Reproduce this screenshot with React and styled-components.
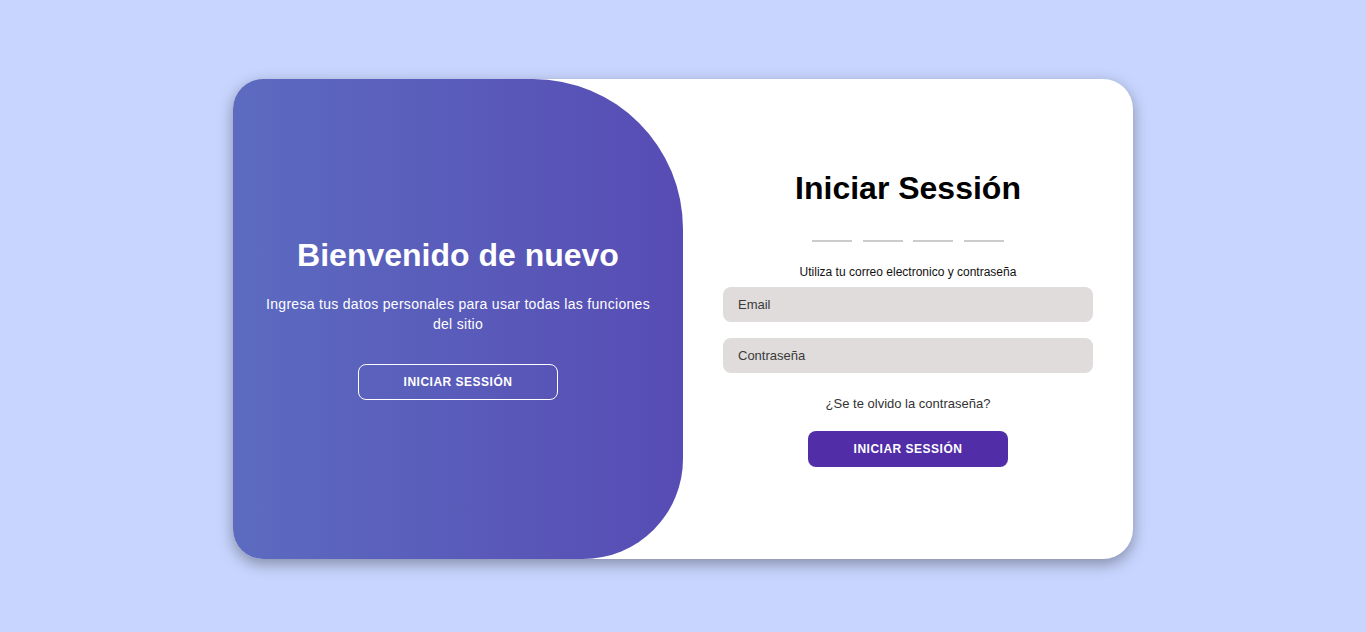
import React from "react";
import styled, { createGlobalStyle } from "styled-components";

const GlobalStyle = createGlobalStyle`
    * {
        box-sizing: border-box;
    }
    body {
        margin: 0;
        background: #c8d5fe;
        font-family: "Liberation Sans", Arial, sans-serif;
    }
`

const Page = styled.div`
    height: 632px;
    display: flex;
    justify-content: center;
    align-items: flex-start;
    padding-top: 79px;
`

const Container = styled.div`
    width: 900px;
    height: 480px;
    background: #fff;
    border-radius: 30px;
    box-shadow: 0 5px 15px rgba(0, 0, 0, 0.35);
    overflow: hidden;
    display: flex;
`

const TogglePanel = styled.div`
    width: 50%;
    height: 100%;
    background: linear-gradient(to right, #5c6bc0, #574cb4);
    border-radius: 0 150px 100px 0;
    color: #fff;
    display: flex;
    flex-direction: column;
    align-items: center;
    justify-content: center;
    padding: 0 30px 2px;
    text-align: center;
`

const FormPanel = styled.form`
    width: 50%;
    height: 100%;
    display: flex;
    flex-direction: column;
    align-items: center;
    justify-content: center;
    padding: 0 40px 2px;
`

const Title = styled.h1`
    margin: ${props => props.$form ? "0 0 33px" : "0"};
    font-size: 32px;
    line-height: 37px;
    font-weight: 700;
    color: ${props => props.$form ? "#000" : "#fff"};
`

const Text = styled.p`
    margin: 20px 0;
    font-size: 14px;
    line-height: 20px;
    letter-spacing: 0.3px;
`

const SocialRow = styled.div`
    display: flex;
    gap: 10.7px;
    margin-bottom: 23px;
`

const SocialLine = styled.a`
    display: block;
    width: 40px;
    height: 2px;
    background: #cccccc;
`

const Hint = styled.span`
    font-size: 12px;
    line-height: 14px;
    color: #111;
`

const Input = styled.input`
    width: 100%;
    height: 35px;
    margin: 8px 0;
    padding: 10px 15px;
    border: none;
    outline: none;
    border-radius: 8px;
    background: #e0dcdc;
    font-family: "Liberation Sans", Arial, sans-serif;
    font-size: 13px;
    color: #333;

    &::placeholder {
        color: #3a3a3a;
    }
`

const Forgot = styled.a`
    margin: 15px 0 10px;
    font-size: 13px;
    line-height: 15px;
    color: #333;
    text-decoration: none;
`

const Button = styled.button`
    margin-top: 10px;
    padding: 10px 45px;
    height: 36px;
    border-radius: 8px;
    border: 1px solid ${props => props.$ghost ? "#fff" : "transparent"};
    background: ${props => props.$ghost ? "transparent" : "#512da8"};
    color: #fff;
    font-family: "Liberation Sans", Arial, sans-serif;
    font-size: 12px;
    line-height: 14px;
    font-weight: 700;
    letter-spacing: 0.5px;
    text-transform: uppercase;
    cursor: pointer;
`

const App = () => {
    return (
        <Page>
            <GlobalStyle />
            <Container>
                <TogglePanel>
                    <Title>Bienvenido de nuevo</Title>
                    <Text>Ingresa tus datos personales para usar todas las funciones del sitio</Text>
                    <Button type="button" $ghost>Iniciar Sessión</Button>
                </TogglePanel>
                <FormPanel onSubmit={e => e.preventDefault()}>
                    <Title $form>Iniciar Sessión</Title>
                    <SocialRow>
                        <SocialLine href="#" />
                        <SocialLine href="#" />
                        <SocialLine href="#" />
                        <SocialLine href="#" />
                    </SocialRow>
                    <Hint>Utiliza tu correo electronico y contraseña</Hint>
                    <Input type="email" placeholder="Email" />
                    <Input type="password" placeholder="Contraseña" />
                    <Forgot href="#">¿Se te olvido la contraseña?</Forgot>
                    <Button type="submit">Iniciar Sessión</Button>
                </FormPanel>
            </Container>
        </Page>
    )
}

export default App;
